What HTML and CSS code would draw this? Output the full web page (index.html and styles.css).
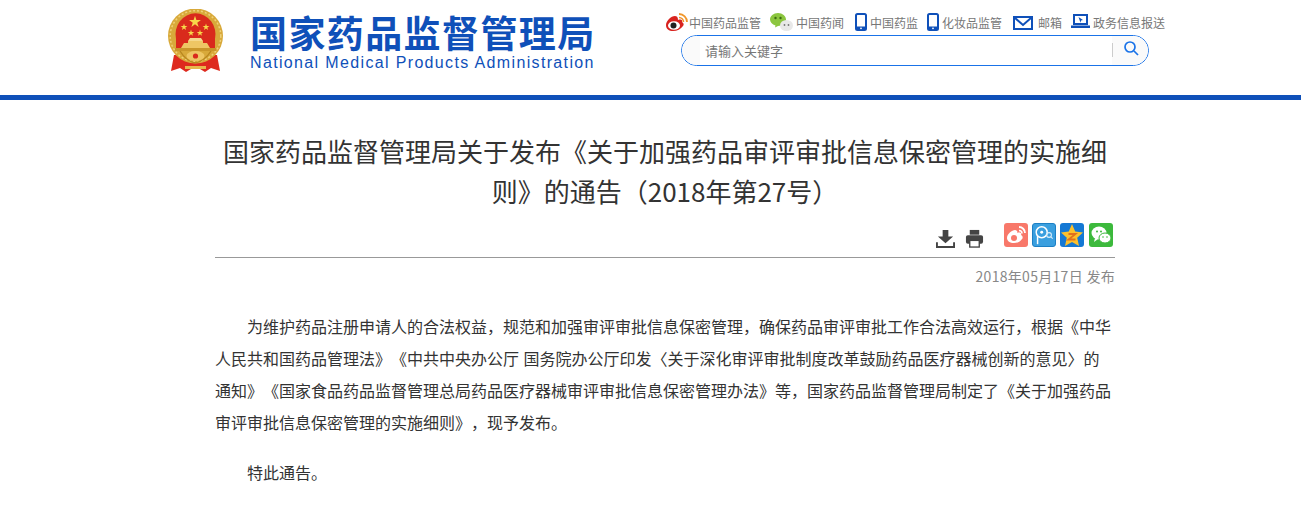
FILE: index.html
```html
<!DOCTYPE html>
<html lang="zh-CN">
<head>
  <meta charset="UTF-8" />
  <title>国家药品监督管理局</title>
  <link rel="stylesheet" href="styles.css">
</head>
<body>
  <!-- Header -->
  <div class="header">
    <div class="header-in">
      <svg class="emblem" viewBox="0 0 60 64">
        <defs>
          <polygon id="star" points="0,-10 2.24,-3.09 9.51,-3.09 3.63,1.18 5.88,8.09 0,3.82 -5.88,8.09 -3.63,1.18 -9.51,-3.09 -2.24,-3.09" fill="#f7d84a"/>
        </defs>
        <path d="M8 46 L5 62 L14 59 L20 63 L25 60 H34 L39 63 L45 59 L54 62 L51 46 Z" fill="#de2a1e"/>
        <circle cx="29.5" cy="27" r="27.5" fill="#d8a93a"/>
        <circle cx="29.5" cy="27" r="25.3" fill="none" stroke="#efd078" stroke-width="1.5" stroke-dasharray="2 2"/>
        <path d="M10 30 A20 21 0 1 1 49 30 L49 39 H10 Z" fill="#d92a1c"/>
        <use href="#star" transform="translate(29 13) scale(.62)"/>
        <use href="#star" transform="translate(18 18) scale(.36)"/>
        <use href="#star" transform="translate(40 18) scale(.36)"/>
        <use href="#star" transform="translate(25 24) scale(.34)"/>
        <use href="#star" transform="translate(34 24) scale(.34)"/>
        <path d="M24 29 H35 L37 32 H22 Z" fill="#f5d88c"/>
        <path d="M22 32 H37 V34 H41 L44 39 H15 L18 34 H22 Z" fill="#eec664"/>
        <rect x="9" y="39" width="41" height="3" fill="#c9962b"/>
        <ellipse cx="29.5" cy="47" rx="9" ry="5" fill="#eec664"/>
        <circle cx="29.5" cy="47" r="2.6" fill="#d92a1c"/>
        <path d="M14 42 Q20 52 29 54 Q39 52 45 42" fill="none" stroke="#b8871f" stroke-width="1.4"/>
        <rect x="19" y="57" width="21" height="3" fill="#e7b84c"/>
      </svg>
      <div class="logo">
        <div class="logo-cn">国家药品监督管理局</div>
        <div class="logo-en">National Medical Products Administration</div>
      </div>
      <div class="tools">
        <ul class="links">
          <li class="item-weibo">
            <svg class="ico-weibo" viewBox="0 0 23 18">
              <path d="M1 12 C1 8 6 3 10 3 C13 3 13 6 13 7 C16 6 18 7 17 9 C19 10 19 12 18 13 C16 16 12 18 8 18 C4 18 1 16 1 12 Z" fill="#d8231f"/>
              <ellipse cx="9" cy="12.5" rx="6" ry="4.3" fill="#fff"/>
              <circle cx="8.5" cy="12.5" r="3" fill="#222"/>
              <path d="M14 1 A8 8 0 0 1 22 9" fill="none" stroke="#f0962a" stroke-width="1.8"/>
              <path d="M14 4.5 A4.5 4.5 0 0 1 18.5 9" fill="none" stroke="#f0962a" stroke-width="1.6"/>
            </svg>
            <span>中国药品监管</span>
          </li>
          <li>
            <svg class="ico-wx" viewBox="0 0 23 18">
              <path d="M8 0 C12.5 0 16 3 16 6.5 C16 10 12.5 13 8 13 L5 14.5 L5.5 12.5 C2 11.5 0 9 0 6.5 C0 3 3.5 0 8 0 Z" fill="#8cc63f"/>
              <circle cx="5.5" cy="5" r="1.2" fill="#3d6b12"/>
              <circle cx="10.5" cy="5" r="1.2" fill="#3d6b12"/>
              <ellipse cx="16.5" cy="12.5" rx="6.5" ry="5.5" fill="#e8e8e8"/>
              <circle cx="14.5" cy="12" r=".9" fill="#777"/>
              <circle cx="18.5" cy="12" r=".9" fill="#777"/>
            </svg>
            <span>中国药闻</span>
          </li>
          <li class="item-far">
            <svg class="ico-phone" viewBox="0 0 12 18">
              <rect x="1" y="1" width="10" height="16" rx="1.5" fill="#fff" stroke="#0f50b9" stroke-width="2"/>
              <rect x="1" y="13.5" width="10" height="3.5" fill="#0f50b9"/>
              <circle cx="6" cy="15.3" r=".9" fill="#fff"/>
            </svg>
            <span>中国药监</span>
          </li>
          <li>
            <svg class="ico-phone" viewBox="0 0 12 18">
              <rect x="1" y="1" width="10" height="16" rx="1.5" fill="#fff" stroke="#0f50b9" stroke-width="2"/>
              <rect x="1" y="13.5" width="10" height="3.5" fill="#0f50b9"/>
              <circle cx="6" cy="15.3" r=".9" fill="#fff"/>
            </svg>
            <span>化妆品监管</span>
          </li>
          <li class="item-far item-mail">
            <svg class="ico-mail" viewBox="0 0 20 14">
              <rect x="1" y="1" width="18" height="12" fill="#fff" stroke="#0f50b9" stroke-width="2"/>
              <path d="M2 2 L10 9 L18 2" fill="none" stroke="#0f50b9" stroke-width="2"/>
            </svg>
            <span>邮箱</span>
          </li>
          <li>
            <svg class="ico-screen" viewBox="0 0 19 14">
              <rect x="3" y="1" width="13" height="9" fill="#fff" stroke="#0f50b9" stroke-width="2"/>
              <path d="M7.5 3 L12 6 L10 6.5 L9.5 8.8 Z" fill="#0f50b9"/>
              <rect x="0" y="11.5" width="19" height="2.5" fill="#0f50b9"/>
            </svg>
            <span>政务信息报送</span>
          </li>
        </ul>
        <div class="search">
          <span class="search-text">请输入关键字</span>
          <span class="search-btn">
            <svg viewBox="0 0 16 16" width="16" height="16">
              <circle cx="7" cy="7" r="5" fill="none" stroke="#1a73e8" stroke-width="1.7"/>
              <path d="M11 11 L15 15" stroke="#1a73e8" stroke-width="1.7"/>
            </svg>
          </span>
        </div>
      </div>
    </div>
  </div>

  <!-- Article -->
  <div class="article">
    <h1>国家药品监督管理局关于发布《关于加强药品审评审批信息保密管理的实施细则》的通告（2018年第27号）</h1>
    <div class="share">
      <svg class="act" viewBox="0 0 20 20">
        <path d="M7 1 H13 V8 H18 L10 15 L2 8 H7 Z" fill="#444"/>
        <path d="M1 14 V19 H19 V14" fill="none" stroke="#444" stroke-width="2"/>
      </svg>
      <svg class="act" viewBox="0 0 20 20">
        <rect x="5" y="1" width="10" height="5" fill="#444"/>
        <rect x="1" y="6.5" width="18" height="9" rx="2" fill="#444"/>
        <rect x="5" y="12" width="10" height="7" fill="#fff" stroke="#444" stroke-width="1.4"/>
      </svg>
      <span class="sns sns-wb">
        <svg viewBox="0 0 24 24">
          <path d="M3 15 C3 11 8 7 11 7 C13 7 14 9 13 10 C16 9 18 10 17 12 C19 13 19 15 18 16 C16 19 13 20 10 20 C6 20 3 18 3 15 Z" fill="#fff"/>
          <circle cx="10" cy="15" r="3" fill="#f8786a"/>
          <path d="M15 4 A6 6 0 0 1 21 10" fill="none" stroke="#fff" stroke-width="1.8"/>
          <path d="M15 7.5 A3 3 0 0 1 18 10.5" fill="none" stroke="#fff" stroke-width="1.5"/>
        </svg>
      </span>
      <span class="sns sns-qq">
        <svg viewBox="0 0 24 24">
          <circle cx="9.5" cy="9" r="6" fill="none" stroke="#fff" stroke-width="1.6"/>
          <path d="M5 13 V22" stroke="#fff" stroke-width="1.6"/>
          <circle cx="9.5" cy="9" r="1.6" fill="#fff"/>
          <circle cx="17.5" cy="12" r="2.6" fill="none" stroke="#d6ecfa" stroke-width="1.2"/>
          <path d="M19.5 14 L21.5 16" stroke="#d6ecfa" stroke-width="1.2"/>
        </svg>
      </span>
      <span class="sns sns-qz">
        <svg viewBox="0 0 24 24">
          <polygon points="12,1 15.2,8.5 23,9.5 17.2,14.8 19,23 12,19 5,23 6.8,14.8 1,9.5 8.8,8.5" fill="#fbc02d"/>
          <path d="M8.5 11 H15.5 L8.5 16.5 H15.5" fill="none" stroke="#e0701e" stroke-width="1.8"/>
        </svg>
      </span>
      <span class="sns sns-wx">
        <svg viewBox="0 0 24 24">
          <ellipse cx="10" cy="10" rx="7.5" ry="6.5" fill="#fff"/>
          <path d="M6 15 L5 19 L9 16 Z" fill="#fff"/>
          <ellipse cx="16" cy="15" rx="6" ry="5" fill="#fff" stroke="#3cb93c"/>
          <circle cx="8" cy="8.5" r="1" fill="#3cb93c"/>
          <circle cx="12" cy="8.5" r="1" fill="#3cb93c"/>
          <circle cx="14" cy="14" r=".8" fill="#3cb93c"/>
          <circle cx="18" cy="14" r=".8" fill="#3cb93c"/>
        </svg>
      </span>
    </div>
    <div class="date">2018年05月17日 发布</div>
    <div class="body">
      <p>为维护药品注册申请人的合法权益，规范和加强审评审批信息保密管理，确保药品审评审批工作合法高效运行，根据《中华人民共和国药品管理法》《中共中央办公厅 国务院办公厅印发〈关于深化审评审批制度改革鼓励药品医疗器械创新的意见〉的通知》《国家食品药品监督管理总局药品医疗器械审评审批信息保密管理办法》等，国家药品监督管理局制定了《关于加强药品审评审批信息保密管理的实施细则》，现予发布。</p>
      <p>特此通告。</p>
    </div>
  </div>
</body>
</html>
```

FILE: styles.css
```css
* {
  margin: 0;
  padding: 0;
  box-sizing: border-box;
}

body {
  font-family: "Noto Sans CJK SC", "Liberation Sans", sans-serif;
  background: #fff;
  color: #333;
  overflow: hidden;
  text-spacing-trim: space-all;
}

.header {
  height: 100px;
  border-bottom: 5px solid #0f50b9;
}

.header-in {
  width: 1000px;
  margin-left: 166px;
  display: flex;
  align-items: flex-start;
}

.emblem {
  width: 60px;
  height: 64px;
  margin-top: 9px;
  flex: none;
}

.logo {
  margin-left: 24px;
  margin-top: 12px;
  width: 345px;
  flex: none;
}

.logo-cn {
  font-size: 37px;
  line-height: 40px;
  font-weight: 700;
  color: #0f50b9;
  letter-spacing: 1.4px;
  white-space: nowrap;
}

.logo-en {
  font-family: "Liberation Sans", sans-serif;
  font-size: 16px;
  line-height: 18px;
  margin-top: 2px;
  color: #0f50b9;
  letter-spacing: 1.35px;
  white-space: nowrap;
}

.tools {
  margin-left: 70px;
  flex: none;
  width: 500px;
}

.links {
  list-style: none;
  display: flex;
  gap: 9px;
  height: 35px;
  padding-top: 12px;
  font-size: 12px;
  line-height: 20px;
  color: #777;
  white-space: nowrap;
}

.links li {
  display: flex;
  align-items: center;
  gap: 3px;
  height: 20px;
}

.links li span {
  padding-top: 2px;
}

.links .item-weibo { gap: 1px; }
.links .item-far { margin-left: 2px; }
.links .item-mail { gap: 5px; }

.ico-weibo { width: 23px; height: 18px; }
.ico-wx { width: 23px; height: 18px; }
.ico-phone { width: 12px; height: 18px; }
.ico-mail { width: 20px; height: 14px; margin-top: 2px; }
.ico-screen { width: 19px; height: 14px; margin-top: -3px; }

.search {
  width: 468px;
  height: 31px;
  margin-left: 16px;
  border: 1px solid #1a73e8;
  border-radius: 16px;
  display: flex;
  align-items: center;
  justify-content: space-between;
  overflow: hidden;
}

.search-text {
  height: 100%;
  line-height: 29px;
  padding-left: 23px;
  font-size: 13px;
  color: #777;
  background: linear-gradient(to right, #fafafa 18px, #fff 18px);
  flex: 1;
}

.search-btn {
  width: 36px;
  height: 100%;
  background: #fafafa;
  display: flex;
  justify-content: center;
  padding-top: 4px;
  position: relative;
}

.search-btn svg {
  margin-left: 2px;
}

.search-btn::before {
  content: "";
  position: absolute;
  left: 0;
  top: 7px;
  height: 14px;
  border-left: 1px solid #ccc;
}

.article {
  width: 900px;
  margin-left: 215px;
}

.article h1 {
  font-size: 26px;
  line-height: 40px;
  font-weight: 400;
  text-align: center;
  color: #333;
  padding-top: 31px;
}

.share {
  display: flex;
  justify-content: flex-end;
  align-items: flex-end;
  height: 47px;
  padding-bottom: 9px;
  padding-right: 2px;
  border-bottom: 1px solid #999;
}

.act {
  width: 19px;
  height: 19px;
}

.act + .act {
  margin-left: 10px;
}

.sns {
  width: 24px;
  height: 24px;
  border-radius: 3px;
  display: block;
  margin-left: 4px;
  margin-bottom: 1px;
}

.act + .sns {
  margin-left: 20px;
}

.sns svg {
  width: 24px;
  height: 24px;
  display: block;
}

.sns-wb { background: #f8786a; }
.sns-qq { background: #3a9fdf; border: 1px solid #1c7fc4; }
.sns-qz { background: #1478d4; }
.sns-wx { background: #3cb93c; margin-left: 5px; }

.sns-qq svg {
  width: 22px;
  height: 22px;
}

.date {
  text-align: right;
  font-size: 14px;
  line-height: 20px;
  padding-top: 8px;
  color: #888;
  letter-spacing: .3px;
}

.body {
  padding-top: 24px;
  font-size: 16px;
  line-height: 32px;
  word-spacing: 1px;
  color: #333;
}

.body p {
  text-indent: 2em;
  margin-bottom: 18px;
}
```
